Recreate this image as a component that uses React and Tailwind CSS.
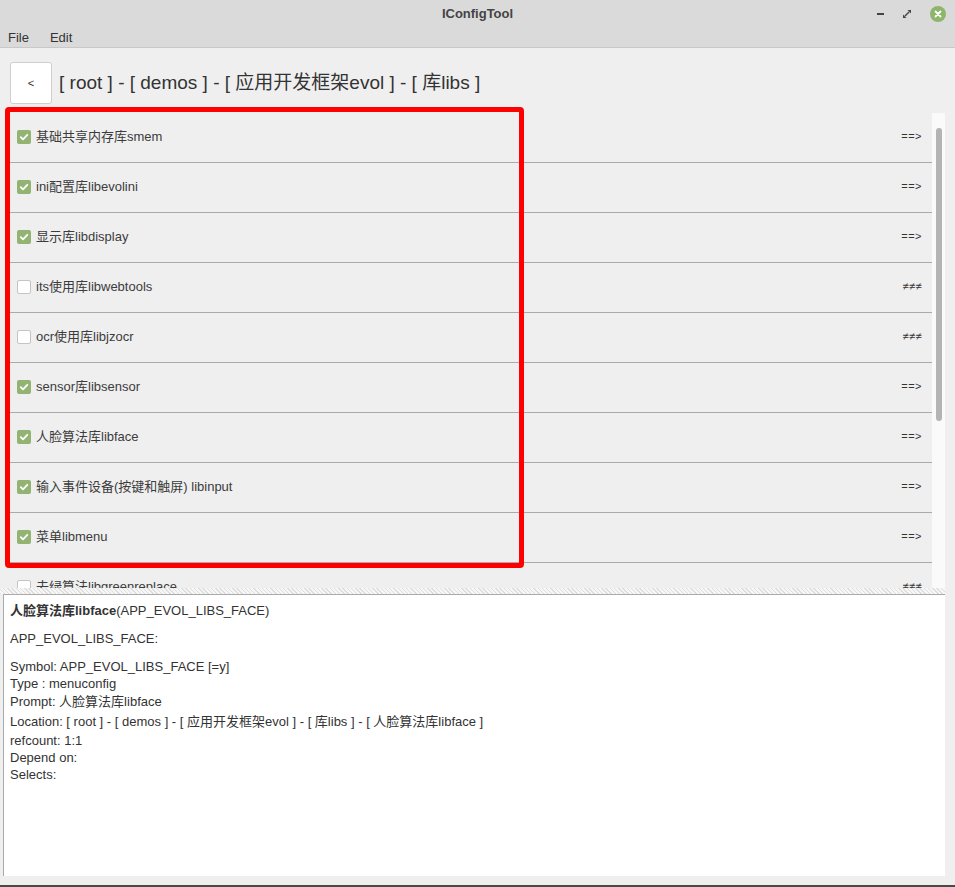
import React from "react";

const rows = [
  { label: "基础共享内存库smem", on: true },
  { label: "ini配置库libevolini", on: true },
  { label: "显示库libdisplay", on: true },
  { label: "its使用库libwebtools", on: false },
  { label: "ocr使用库libjzocr", on: false },
  { label: "sensor库libsensor", on: true },
  { label: "人脸算法库libface", on: true },
  { label: "输入事件设备(按键和触屏) libinput", on: true },
  { label: "菜单libmenu", on: true },
  { label: "去绿算法libgreenreplace", on: false },
];

function CheckBox({ on }) {
  if (!on) {
    return <span className="w-[14px] h-[14px] rounded-[2px] bg-white border border-[#c4c4c4] shrink-0" />;
  }
  return (
    <span className="w-[14px] h-[14px] rounded-[2px] bg-[#92b372] shrink-0 flex items-center justify-center">
      <svg width="10" height="10" viewBox="0 0 10 10">
        <path d="M1.8 5.2 L4 7.3 L8.3 2.8" fill="none" stroke="#fff" strokeWidth="1.8" strokeLinecap="round" strokeLinejoin="round" />
      </svg>
    </span>
  );
}

export default function App() {
  return (
    <div
      className="relative w-[955px] h-[887px] bg-[#efefef] flex flex-col text-[#3c3c3c] overflow-hidden"
      style={{ fontFamily: '"Liberation Sans", "Noto Sans CJK SC", sans-serif' }}
    >
      {/* title bar */}
      <div className="h-[28px] bg-[#dadada] grid grid-cols-[1fr_auto_1fr] items-center">
        <div />
        <div className="text-[13px] font-bold text-[#444]">IConfigTool</div>
        <div className="flex items-center justify-end gap-[19px] pr-[9px]">
          <span className="w-[7px] h-[2px] bg-[#444]" />
          <svg width="8" height="8" viewBox="0 0 8 8">
            <path d="M4.5 0 H8 V3.5 Z M3.5 8 H0 V4.5 Z" fill="#444" />
            <path d="M2 6 L6 2" stroke="#444" strokeWidth="1.4" />
          </svg>
          <span className="w-[16px] h-[16px] rounded-full bg-[#8fb56b] flex items-center justify-center">
            <svg width="8" height="8" viewBox="0 0 8 8">
              <path d="M1.5 1.5 L6.5 6.5 M6.5 1.5 L1.5 6.5" stroke="#fff" strokeWidth="1.8" strokeLinecap="round" />
            </svg>
          </span>
        </div>
      </div>

      {/* menu bar */}
      <div className="h-[20px] bg-[#dadada] border-b border-[#c8c8c8] flex items-center gap-[21px] pl-[8px] text-[13px] text-[#333]">
        <span>File</span>
        <span>Edit</span>
      </div>

      {/* breadcrumb */}
      <div className="h-[65px] flex items-start gap-[7px] pl-[10px] pt-[14px]">
        <button className="w-[42px] h-[42px] bg-white border border-[#cfcfcf] rounded-[3px] text-[11px] text-[#333] flex items-center justify-center">
          &lt;
        </button>
        <span className="h-[42px] flex items-center text-[19px] text-[#333]">[ root ] - [ demos ] - [ 应用开发框架evol ] - [ 库libs ]</span>
      </div>

      {/* list */}
      <div className="h-[475px] flex pl-[8px] pr-[10px]">
        <div className="flex-1 overflow-hidden">
          {rows.map((r) => (
            <div key={r.label} className="h-[50px] border-b border-[#aaaaaa] flex items-center pl-[9px] pr-[10px] gap-[5px] pb-[2px]">
              <CheckBox on={r.on} />
              <span className="text-[13px] flex-1">{r.label}</span>
              <span className="text-[11px] text-[#333] tracking-[0.5px]">{r.on ? "==>" : "≠≠≠"}</span>
            </div>
          ))}
        </div>
        <div className="w-[13px] bg-[#fafafa] pt-[15px] flex justify-center">
          <div className="w-[6px] h-[293px] rounded-full bg-[#b4b4b4]" />
        </div>
      </div>

      {/* splitter */}
      <div className="h-[6px] mr-[10px] bg-[repeating-linear-gradient(45deg,#dedede_0px,#dedede_1px,#f6f6f6_1px,#f6f6f6_3px)]" />

      {/* detail pane */}
      <div className="h-[282px] ml-[3px] mr-[10px] bg-white border-t border-l border-[#aaaaaa] pl-[6px] pt-[7px] text-[13px] text-[#333]">
        <div className="h-[17px] leading-[17px]">
          <b>人脸算法库libface</b>(APP_EVOL_LIBS_FACE)
        </div>
        <div className="h-[17px] leading-[17px] mt-[11px]">APP_EVOL_LIBS_FACE:</div>
        <div className="h-[17px] leading-[17px] mt-[11px]">Symbol: APP_EVOL_LIBS_FACE [=y]</div>
        <div className="h-[17px] leading-[17px]">Type : menuconfig</div>
        <div className="h-[20px] leading-[20px]">Prompt: 人脸算法库libface</div>
        <div className="h-[20px] leading-[20px]">Location: [ root ] - [ demos ] - [ 应用开发框架evol ] - [ 库libs ] - [ 人脸算法库libface ]</div>
        <div className="h-[17px] leading-[17px]">refcount: 1:1</div>
        <div className="h-[17px] leading-[17px]">Depend on:</div>
        <div className="h-[17px] leading-[17px]">Selects:</div>
      </div>

      <div className="flex-1" />
      <div className="h-[2px] bg-[#4a4a4a]" />

      {/* annotation */}
      <div className="absolute left-[5px] top-[107px] w-[519px] h-[461px] border-[5px] border-[#ff0000] rounded-[4px] pointer-events-none" />
    </div>
  );
}
